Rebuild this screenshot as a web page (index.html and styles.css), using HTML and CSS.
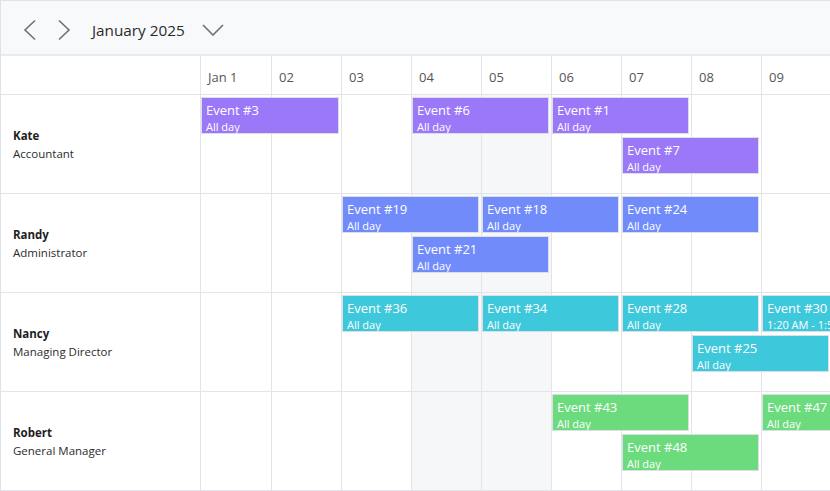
FILE: index.html
```html
<!DOCTYPE html>
<html>
<head>
<meta charset="utf-8">
<link rel="stylesheet" href="styles.css">
</head>
<body>
<div class="scheduler">
  <div class="toolbar">
    <button class="nav" aria-label="Previous">
      <svg width="14" height="22" viewBox="0 0 14 22"><path d="M12 1.5 L2 11 L12 20.5" fill="none" stroke="#707070" stroke-width="1.6"/></svg>
    </button>
    <button class="nav" aria-label="Next">
      <svg width="14" height="22" viewBox="0 0 14 22"><path d="M2 1.5 L12 11 L2 20.5" fill="none" stroke="#707070" stroke-width="1.6"/></svg>
    </button>
    <span class="title">January 2025</span>
    <button class="drop" aria-label="Select">
      <svg width="22" height="12" viewBox="0 0 22 12"><path d="M1 1 L11 11 L21 1" fill="none" stroke="#707070" stroke-width="1.6"/></svg>
    </button>
  </div>

  <div class="header">
    <div class="corner"></div>
    <div class="day first">Jan 1</div>
    <div class="day">02</div>
    <div class="day">03</div>
    <div class="day">04</div>
    <div class="day">05</div>
    <div class="day">06</div>
    <div class="day">07</div>
    <div class="day">08</div>
    <div class="day">09</div>
  </div>

  <div class="row">
    <div class="resource"><div class="name">Kate</div><div class="role">Accountant</div></div>
    <div class="timeline">
      <div class="cell c1"></div><div class="cell c2"></div><div class="cell c3"></div><div class="cell c4 weekend"></div><div class="cell c5 weekend"></div><div class="cell c6"></div><div class="cell c7"></div><div class="cell c8"></div><div class="cell c9"></div>
      <div class="event purple lane1" style="grid-column: 1 / span 2"><div class="et">Event #3</div><div class="es">All day</div></div>
      <div class="event purple lane1" style="grid-column: 4 / span 2"><div class="et">Event #6</div><div class="es">All day</div></div>
      <div class="event purple lane1" style="grid-column: 6 / span 2"><div class="et">Event #1</div><div class="es">All day</div></div>
      <div class="event purple lane2" style="grid-column: 7 / span 2"><div class="et">Event #7</div><div class="es">All day</div></div>
    </div>
  </div>

  <div class="row">
    <div class="resource"><div class="name">Randy</div><div class="role">Administrator</div></div>
    <div class="timeline">
      <div class="cell c1"></div><div class="cell c2"></div><div class="cell c3"></div><div class="cell c4 weekend"></div><div class="cell c5 weekend"></div><div class="cell c6"></div><div class="cell c7"></div><div class="cell c8"></div><div class="cell c9"></div>
      <div class="event blue lane1" style="grid-column: 3 / span 2"><div class="et">Event #19</div><div class="es">All day</div></div>
      <div class="event blue lane1" style="grid-column: 5 / span 2"><div class="et">Event #18</div><div class="es">All day</div></div>
      <div class="event blue lane1" style="grid-column: 7 / span 2"><div class="et">Event #24</div><div class="es">All day</div></div>
      <div class="event blue lane2" style="grid-column: 4 / span 2"><div class="et">Event #21</div><div class="es">All day</div></div>
    </div>
  </div>

  <div class="row">
    <div class="resource"><div class="name">Nancy</div><div class="role">Managing Director</div></div>
    <div class="timeline">
      <div class="cell c1"></div><div class="cell c2"></div><div class="cell c3"></div><div class="cell c4 weekend"></div><div class="cell c5 weekend"></div><div class="cell c6"></div><div class="cell c7"></div><div class="cell c8"></div><div class="cell c9"></div>
      <div class="event cyan lane1" style="grid-column: 3 / span 2"><div class="et">Event #36</div><div class="es">All day</div></div>
      <div class="event cyan lane1" style="grid-column: 5 / span 2"><div class="et">Event #34</div><div class="es">All day</div></div>
      <div class="event cyan lane1" style="grid-column: 7 / span 2"><div class="et">Event #28</div><div class="es">All day</div></div>
      <div class="event cyan lane1 open" style="grid-column: 9 / span 2"><div class="et">Event #30</div><div class="es">1:20 AM - 1:50 AM</div></div>
      <div class="event cyan lane2" style="grid-column: 8 / span 2"><div class="et">Event #25</div><div class="es">All day</div></div>
    </div>
  </div>

  <div class="row">
    <div class="resource"><div class="name">Robert</div><div class="role">General Manager</div></div>
    <div class="timeline">
      <div class="cell c1"></div><div class="cell c2"></div><div class="cell c3"></div><div class="cell c4 weekend"></div><div class="cell c5 weekend"></div><div class="cell c6"></div><div class="cell c7"></div><div class="cell c8"></div><div class="cell c9"></div>
      <div class="event green lane1" style="grid-column: 6 / span 2"><div class="et">Event #43</div><div class="es">All day</div></div>
      <div class="event green lane1 open" style="grid-column: 9 / span 2"><div class="et">Event #47</div><div class="es">All day</div></div>
      <div class="event green lane2" style="grid-column: 7 / span 2"><div class="et">Event #48</div><div class="es">All day</div></div>
    </div>
  </div>
</div>
</body>
</html>
```

FILE: styles.css
```css
* { box-sizing: border-box; }
html, body { margin: 0; padding: 0; background: #fff; }
body { font-family: "Open Sans", "Noto Sans", sans-serif; color: #222; }

.scheduler {
  width: 830px;
  height: 491px;
  overflow: hidden;
  border-top: 1px solid #dfe2e8;
  border-left: 1px solid #dfe2e8;
}

.toolbar {
  height: 55px;
  background: #f8f9fb;
  border-bottom: 2px solid #e8ebf0;
  display: flex;
  align-items: center;
  padding-left: 15px;
  padding-top: 5px;
}
.nav, .drop {
  border: 0;
  background: transparent;
  padding: 0;
  display: flex;
  align-items: center;
  justify-content: center;
}
.nav { width: 28px; height: 30px; margin-right: 6px; }
.nav + .nav { margin-right: 0; }
.title {
  font-size: 15.3px;
  color: #2a2a2a;
  margin-left: 14px;
}
.drop { width: 24px; height: 24px; margin-left: 16px; }

.header {
  height: 39px;
  display: grid;
  grid-template-columns: 199px 71px repeat(8, 70px);
  border-bottom: 1px solid #e2e4e8;
}
.day {
  border-left: 1px solid #e2e4e8;
  font-size: 13px;
  color: #555;
  padding-left: 7px;
  padding-top: 3px;
  display: flex;
  align-items: center;
}

.row {
  height: 99px;
  display: grid;
  grid-template-columns: 199px 1fr;
  border-bottom: 1px solid #e2e4e8;
}
.resource {
  display: flex;
  flex-direction: column;
  justify-content: center;
  padding-left: 12px;
  padding-top: 2px;
  font-size: 11.5px;
  line-height: 18px;
}
.name { font-weight: 700; color: #1e1e1e; }
.role { color: #2c2c2c; }

.timeline {
  display: grid;
  grid-template-columns: 71px repeat(8, 70px) 70px;
  grid-template-rows: 2px 37px 3px 37px 1fr;
}
.cell { grid-row: 1 / -1; border-left: 1px solid #e2e4e8; }
.c1 { grid-column: 1; } .c2 { grid-column: 2; } .c3 { grid-column: 3; }
.c4 { grid-column: 4; } .c5 { grid-column: 5; } .c6 { grid-column: 6; }
.c7 { grid-column: 7; } .c8 { grid-column: 8; } .c9 { grid-column: 9; }
.weekend { background: #f6f7f9; }

.event {
  margin-left: 1px;
  margin-right: 2px;
  border: 1px solid #dcdfe4;
  color: #fff;
  padding: 4px 4px 0;
  overflow: hidden;
  white-space: nowrap;
  z-index: 1;
}
.event.open { margin-right: -20px; }
.lane1 { grid-row: 2; }
.lane2 { grid-row: 4; }
.et { font-size: 13px; line-height: 16px; }
.es { font-size: 11px; line-height: 15px; margin-top: 1px; }

.purple { background: #9b78f8; }
.blue { background: #718bfb; }
.cyan { background: #3ec8db; }
.green { background: #6bdb7d; }
```
